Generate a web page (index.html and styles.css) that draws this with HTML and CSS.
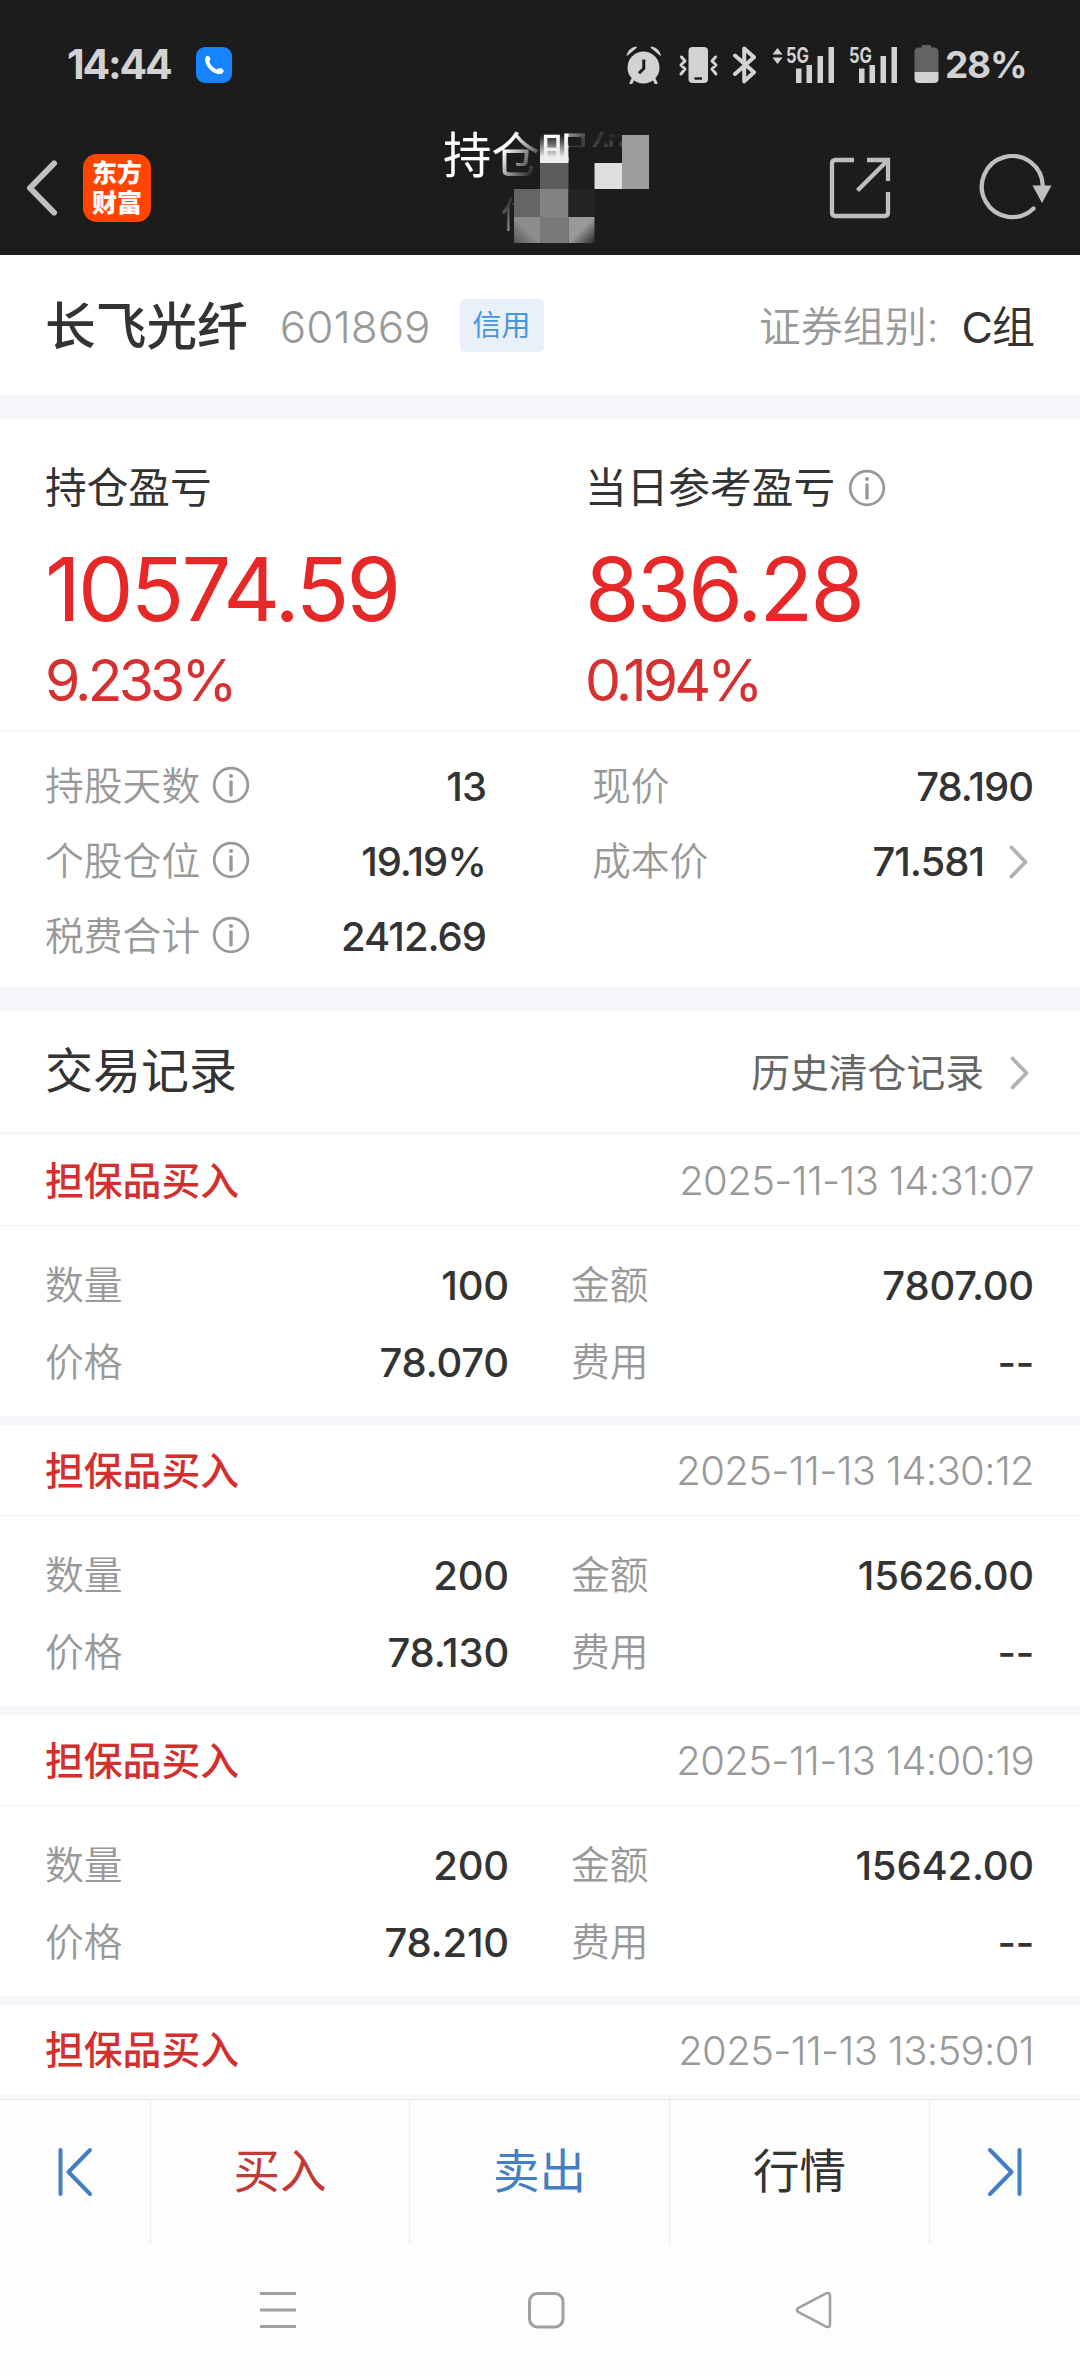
FILE: index.html
```html
<!DOCTYPE html>
<html lang="zh-CN">
<head>
<meta charset="utf-8">
<title>持仓明细</title>
<link rel="stylesheet" href="styles.css">
</head>
<body>
<svg class="defs" width="0" height="0">
  <symbol id="info" viewBox="0 0 38 38"><circle cx="19" cy="19" r="16.8" fill="none" stroke="#999" stroke-width="2.8"/><circle cx="19" cy="10" r="2.1" fill="#999"/><path d="M19 16v13" stroke="#999" stroke-width="3.4" stroke-linecap="round"/></symbol>
  <symbol id="chev" viewBox="0 0 20 34"><path d="M2.5 2.5 16.5 17 2.5 31.500" fill="none" stroke="#b2b2b2" stroke-width="3.8" stroke-linecap="round" stroke-linejoin="round"/></symbol>
</svg>
<div class="screen">
  <header class="top">
    <div class="status">
      <span class="clock">14:44</span>
      <svg class="call" viewBox="0 0 36 36"><rect width="36" height="36" rx="9" fill="#1684ff"/><path d="M9.500 10.300C10.600 8.400 13.200 8.700 13.900 10.600c.5 1.400.7 2.900-.6 4.100 1.400 3.500 4.100 6.300 7.700 7.700 1.500-1.600 4.500-1.300 6 .1 1.100 1.100.8 2.700-.6 3.700-5 3.400-16.300-3.400-17.300-13.200-.1-1 .1-2 .4-2.700z" fill="#fff"/></svg>
      <svg class="sysicons" viewBox="0 0 316 40">
        <g fill="#d2d2d2" stroke="none">
          <circle cx="18.500" cy="23.500" r="16"/>
          <path d="M1.500 11.500A11 11 0 0 1 11 2.500q1.500.3.500 1.600L3.500 10.800q-1.700 1.500-2 .7zM36 11.500A11 11 0 0 0 26.500 2.500q-1.500.3-.5 1.600L34 10.800q1.700 1.500 2 .7z"/>
          <path d="M8 35l-2 4M29 35l2 4" stroke="#d2d2d2" stroke-width="3" stroke-linecap="round"/>
          <rect x="63.500" y="3" width="19.500" height="36" rx="4"/>
          <path d="M147.500 10.500 152.500 4l5 6.500zM147.500 13.500l5 6.500 5-6.500z"/>
          <path d="M171 24.500h5.500V39H171zM181.500 21H187v18h-5.500zM192.500 12h5.500v27h-5.500zM203.500 3h5.500v36h-5.500zM234 24.500h5.500V39H234zM244.500 21h5.500v18h-5.500zM255.500 12h5.500v27h-5.500zM266.500 3h5.500v36h-5.500z"/>
        </g>
        <path d="M18.800 15.500v9l-4.800 4.800" fill="none" stroke="#1c1c1c" stroke-width="3"/>
        <path d="M69.500 34.500h7.500" stroke="#1c1c1c" stroke-width="2.400"/>
        <g fill="none" stroke="#d2d2d2" stroke-width="3" stroke-linecap="round" stroke-linejoin="round">
          <path d="M56.500 13l3.500 4-4 4 4 4-4 5M90.500 13 87 17l4 4-4 4 4 5"/>
          <path d="M110 11.500l19 16.800-9.800 9V4.500l9.800 8.800L110 30" stroke-width="4"/>
        </g>
        <text class="net" x="161" y="18.500" textLength="23" lengthAdjust="spacingAndGlyphs">5G</text>
        <text class="net" x="224" y="18.500" textLength="23" lengthAdjust="spacingAndGlyphs">5G</text>
        <path d="M298 1h7q1.500 0 1.500 2.500h2.500q4.500 0 4.500 4.500V28h-24V8q0-4.500 4.500-4.500h2.500Q296.500 1 298 1z" fill="#636363"/>
        <path d="M289.500 28h24v6.500q0 4.500-4.500 4.500h-15q-4.500 0-4.500-4.500z" fill="#d2d2d2"/>
      </svg>
      <span class="pct">28%</span>
    </div>
    <nav class="titlebar">
      <svg class="back" viewBox="0 0 34 58"><path d="M29 4.500 5 29 29 53.500" fill="none" stroke="#bfbfbf" stroke-width="6" stroke-linecap="round" stroke-linejoin="round"/></svg>
      <div class="logo"><span>东方</span><span>财富</span></div>
      <div class="title">
        <h1>持仓明细</h1>
        <p>信用</p>
        <svg class="mosaic" viewBox="0 0 220 130">
          <defs>
            <linearGradient id="f1" x1="0" x2="0" y1="0" y2="1"><stop offset="0" stop-color="#ddd" stop-opacity="0"/><stop offset=".8" stop-color="#eee"/></linearGradient>
            <linearGradient id="f2" x1="0" x2="1" y1="0" y2=".9"><stop offset=".3" stop-color="#1c1c1c" stop-opacity="0"/><stop offset=".85" stop-color="#1c1c1c"/></linearGradient>
            <linearGradient id="f3" x1="0" x2="1" y1="0" y2=".3"><stop offset="0" stop-color="#1c1c1c" stop-opacity=".3"/><stop offset=".45" stop-color="#1c1c1c" stop-opacity=".85"/><stop offset="1" stop-color="#1c1c1c"/></linearGradient>
            <linearGradient id="f4" x1="0" x2="1" y1="0" y2="1"><stop offset=".5" stop-color="#999"/><stop offset="1" stop-color="#2b2b2b"/></linearGradient>
            <linearGradient id="f5" x1="1" x2="0" y1="0" y2="1"><stop offset=".5" stop-color="#8d8d8d"/><stop offset="1" stop-color="#555"/></linearGradient>
            <linearGradient id="f6" x1="0" x2="0" y1="0" y2="1"><stop offset="0" stop-color="#1c1c1c"/><stop offset="1" stop-color="#1c1c1c" stop-opacity="0"/></linearGradient>
          </defs>
          <rect x="54" y="8" width="46" height="60" fill="url(#f2)"/>
          <rect x="100" y="42" width="120" height="85" fill="#1c1c1c"/>
          <rect x="128.500" y="6" width="66" height="14" fill="url(#f3)"/>
          <rect x="128.500" y="20" width="66" height="12" fill="#1c1c1c" opacity=".85"/>
          <rect x="128.500" y="26" width="66" height="20" fill="#1c1c1c"/>
          <rect x="54" y="68" width="22" height="46" fill="url(#f6)"/>
          <rect x="74" y="68" width="26" height="60" fill="#1c1c1c"/>
          <rect x="100" y="14" width="28.500" height="28" fill="url(#f1)"/>
          <rect x="100" y="42" width="28.500" height="26" fill="#5c5c5c"/>
          <rect x="100" y="68" width="28.500" height="28" fill="#828282"/>
          <rect x="100" y="96" width="28.500" height="26" fill="#797979"/>
          <rect x="74" y="68" width="26" height="28" fill="#656565"/>
          <rect x="74" y="96" width="26" height="26" fill="url(#f5)"/>
          <rect x="128.500" y="68" width="26" height="28" fill="#242424"/>
          <rect x="128.500" y="96" width="26" height="26" fill="url(#f4)"/>
          <rect x="154.500" y="42" width="27.500" height="26" fill="#dedede"/>
          <rect x="182" y="14" width="27" height="54" fill="#9c9c9c"/>
        </svg>
      </div>
      <svg class="share" viewBox="0 0 64 64"><g fill="none" stroke="#bfbfbf" stroke-width="4.300"><path d="M26 4H7.500Q4 4 4 7.500V56.500Q4 60 7.500 60h49Q60 60 60 56.500V36"/><path d="M39 4h21v21M59 5 29.500 34.500"/></g></svg>
      <svg class="reload" viewBox="0 0 74 68"><path d="M54.500 54.500A30.500 30.500 0 1 1 63.800 32" fill="none" stroke="#bfbfbf" stroke-width="4.300" stroke-linecap="round"/><path d="M53.500 31.500h19L63 49z" fill="#bfbfbf"/></svg>
    </nav>
  </header>

  <main class="content">
    <section class="stock">
      <strong>长飞光纤</strong><span class="code">601869</span><span class="tag">信用</span>
      <span class="group">证券组别:</span><span class="groupval">C组</span>
    </section>
    <section class="profit">
      <div class="cell"><h2>持仓盈亏</h2><div class="big">10574.59</div><div class="rate">9.233%</div></div>
      <div class="cell"><h2>当日参考盈亏<svg class="info"><use href="#info"/></svg></h2><div class="big">836.28</div><div class="rate">0.194%</div></div>
    </section>
    <section class="stats">
      <div class="col">
        <div class="stat"><span>持股天数</span><svg class="info"><use href="#info"/></svg><b>13</b></div>
        <div class="stat"><span>个股仓位</span><svg class="info"><use href="#info"/></svg><b>19.19%</b></div>
        <div class="stat"><span>税费合计</span><svg class="info"><use href="#info"/></svg><b>2412.69</b></div>
      </div>
      <div class="col">
        <div class="stat"><span>现价</span><b>78.190</b></div>
        <div class="stat"><span>成本价</span><b>71.581</b><svg class="chev"><use href="#chev"/></svg></div>
      </div>
    </section>
    <section class="rechead"><h3>交易记录</h3><span>历史清仓记录</span><svg class="chev"><use href="#chev"/></svg></section>

    <article class="record">
      <div class="rtop"><em>担保品买入</em><time>2025-11-13 14:31:07</time></div>
      <div class="rbody"><span>数量</span><b>100</b><span>金额</span><b>7807.00</b><span>价格</span><b>78.070</b><span>费用</span><b>--</b></div>
    </article>
    <article class="record">
      <div class="rtop"><em>担保品买入</em><time>2025-11-13 14:30:12</time></div>
      <div class="rbody"><span>数量</span><b>200</b><span>金额</span><b>15626.00</b><span>价格</span><b>78.130</b><span>费用</span><b>--</b></div>
    </article>
    <article class="record">
      <div class="rtop"><em>担保品买入</em><time>2025-11-13 14:00:19</time></div>
      <div class="rbody"><span>数量</span><b>200</b><span>金额</span><b>15642.00</b><span>价格</span><b>78.210</b><span>费用</span><b>--</b></div>
    </article>
    <article class="record">
      <div class="rtop"><em>担保品买入</em><time>2025-11-13 13:59:01</time></div>
    </article>
  </main>

  <footer class="actions">
    <div><svg class="skip" viewBox="0 0 36 50"><path d="M3.500 3v44M33 3 11.500 25 33 47" /></svg></div>
    <div class="buy">买入</div><div class="sell">卖出</div><div class="quote">行情</div>
    <div><svg class="skip" viewBox="0 0 36 50"><path d="M32.500 3v44M3 3l21.500 22L3 47"/></svg></div>
  </footer>
  <div class="sysnav">
    <svg viewBox="0 0 40 40"><path d="M2 3.500h36M2 20h36M2 36.500h36"/></svg>
    <svg viewBox="0 0 40 40"><rect x="3.500" y="3.500" width="33.500" height="33.500" rx="8"/></svg>
    <svg viewBox="0 0 40 40"><path d="M4.500 17.800 32 3.400Q36 2 36 6V34q0 4-4 2.600L4.500 22.200Q1.500 20 4.500 17.800z" stroke-width="2.600"/></svg>
  </div>
</div>
</body>
</html>
```
FILE: styles.css
```css
* { box-sizing: border-box; margin: 0; padding: 0; }
body { width: 1080px; height: 2376px; overflow: hidden; background: #fdfdfd; color: #333;
  font-family: Inter, "Noto Sans CJK SC", sans-serif; font-size: 39px; line-height: 1.2; }
svg { display: block; flex: none; }
.defs { position: absolute; }
h1, h2, h3, b, em { font-style: normal; font-weight: 400; }
.screen { height: 2376px; display: flex; flex-direction: column; }

.top { height: 255px; flex: none; background: #1c1c1c; color: #d2d2d2; }
.status { height: 128px; padding: 0 50px 0 67px; display: flex; align-items: center; }
.clock { width: 129px; font-size: 41px; font-weight: 650; letter-spacing: -2.2px; line-height: 48px; }
.call { width: 36px; height: 36px; margin-top: 2px; }
.sysicons { width: 316px; height: 40px; margin-left: 393px; }
.net { font-size: 21px; font-weight: 700; fill: #d2d2d2; }
.pct { margin-left: 4px; margin-top: 3px; font-size: 37px; font-weight: 650; letter-spacing: -1.2px; white-space: nowrap; }
.titlebar { height: 127px; display: flex; align-items: center; padding: 0 27px 8px 25px; }
.back { width: 34px; height: 58px; }
.logo { width: 68px; height: 68px; margin-left: 24px; border-radius: 14px; background: #ff4500; color: #fff; display: flex; flex-direction: column; align-items: center; justify-content: center; font-size: 25px; font-weight: 800; line-height: 30px; }
.title { position: relative; width: 220px; height: 119px; margin-left: 289px; color: #fff; }
.title h1 { padding-left: 3px; font-size: 48.5px; line-height: 56px; white-space: nowrap; }
.title p { padding-left: 61px; font-size: 36px; line-height: 62px; color: #8a8a8a; }
.mosaic { position: absolute; left: 0; top: -7px; width: 220px; height: 130px; }
.share { width: 64px; height: 64px; margin-left: 168px; }
.reload { width: 74px; height: 68px; margin-left: auto; }

.content { height: 1844px; overflow: hidden; flex: none; background: #fff; }
.stock { height: 164px; border-bottom: 24px solid #f6f7fa; display: flex; align-items: center; padding: 5px 46px 0 45px; white-space: nowrap; }
.stock strong { font-size: 50.7px; font-weight: 500; }
.code { margin-left: 32px; color: #999; font-size: 44px; font-weight: 330; letter-spacing: 0; }
.tag { margin-left: 29px; width: 84px; height: 53px; margin-top: -5px; border-radius: 5px; background: #e9f0f9; color: #4a94d8; font-size: 29px; line-height: 53px; text-align: center; }
.group { margin-left: auto; color: #999; font-size: 42px; font-weight: 350; }
.groupval { margin-left: 23px; font-size: 43px; letter-spacing: -1px; }

.profit { height: 313px; border-bottom: 2px solid #f7f7f7; display: grid; grid-template-columns: 540px 1fr; padding: 36px 0 0 45px; }
.cell h2 { display: flex; align-items: center; height: 66px; font-size: 41.7px; }
.cell .info { margin-left: 13px; }
.info { width: 38px; height: 38px; }
.big { height: 136px; line-height: 136px; font-size: 88px; color: #e62828; letter-spacing: -2.8px; }
.rate { margin-top: -4px; height: 56px; line-height: 56px; font-size: 57px; color: #d63030; letter-spacing: -3.8px; }
.stats { height: 279px; border-bottom: 24px solid #f6f7fa; display: grid; grid-template-columns: 441px 441px; column-gap: 106px; padding: 17px 0 0 45px; }
.stat { height: 75px; display: flex; align-items: center; }
.stat span, .rbody span { color: #999; font-weight: 350; font-size: 38.8px; }
.stat .info { margin-left: 12px; margin-top: -4px; }
.stat b, .rbody b { margin-left: auto; font-size: 40px; font-weight: 500; letter-spacing: -1px; }
.rbody b { letter-spacing: -.2px; }
.chev { width: 20px; height: 34px; margin-left: 25px; margin-right: 4px; }

.rechead { height: 124px; border-bottom: 4px solid #f7f7f8; padding: 0 47px 0 45px; display: flex; align-items: center; }
.rechead h3 { font-size: 48px; margin-right: auto; }
.rechead span { color: #666; font-size: 38.8px; padding-top: 5px; }
.rechead .chev { margin-top: 3px; margin-right: 3px; margin-left: 26px; }
.record { height: 290px; border-bottom: 9px solid #f6f7fa; }
.rtop { height: 91px; border-bottom: 1px solid #f4f4f5; padding: 2px 46px 0 45px; display: flex; align-items: center; justify-content: space-between; }
.rtop em { color: #d42f2f; font-size: 38.8px; font-weight: 500; }
.rtop time { color: #999; font-size: 40px; font-weight: 330; letter-spacing: -.6px; }
.rbody { padding: 21px 46px 0 45px; display: grid; grid-template-columns: 100px 364px 100px 1fr; grid-auto-rows: 77px; align-items: center; }
.rbody span:nth-of-type(even) { padding-left: 62px; margin-right: -62px; white-space: nowrap; }
.record:last-child { height: 94px; border-bottom: 5px solid #f6f7fa; }
.record:last-child .rtop { border: 0; height: 89px; }

.actions { height: 145px; flex: none; border-top: 1px solid #e8e8e8; display: grid; grid-template-columns: 151px 259px 260px 260px 150px; font-size: 46.5px; background: #fdfdfd; }
.actions div { display: flex; align-items: center; justify-content: center; border-right: 1px solid #ececec; }
.actions div:last-child { border: 0; }
.buy { color: #c23a38; }
.sell { color: #447fc4; }
.skip { width: 36px; height: 50px; fill: none; stroke: #447fc4; stroke-width: 4; stroke-linecap: round; stroke-linejoin: round; }
.sysnav { flex: 1; display: flex; gap: 228px; padding: 46px 0 0 258px; }
.sysnav svg { width: 40px; height: 40px; fill: none; stroke: #a0a0a0; stroke-width: 3; }
```
